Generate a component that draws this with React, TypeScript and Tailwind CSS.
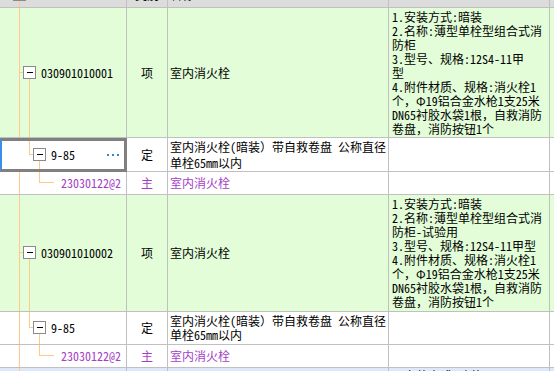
import type { ReactNode } from 'react';

const FONT = "font-['Noto_Sans_Mono_CJK_SC','Noto_Sans_CJK_SC',sans-serif]";
const COLS = 'grid grid-cols-[127px_41px_221px_161px_1fr]';
const CELL = 'border-r border-b border-[#c0c0c0] overflow-hidden';
const GREEN = 'bg-[#e2fdd8]';
const ORANGE = '#ffc98a';
const PURPLE = 'text-[#a53ec6]';

const SPEC1 = [
  '1.安装方式:暗装',
  '2.名称:薄型单栓型组合式消',
  '防柜',
  '3.型号、规格:12S4-11甲',
  '型',
  '4.附件材质、规格:消火栓1',
  '个，Φ19铝合金水枪1支25米',
  'DN65衬胶水袋1根，自救消防',
  '卷盘，消防按钮1个',
];

const SPEC2 = [
  '1.安装方式:暗装',
  '2.名称:薄型单栓型组合式消',
  '防柜-试验用',
  '3.型号、规格:12S4-11甲型',
  '4.附件材质、规格:消火栓1',
  '个，Φ19铝合金水枪1支25米',
  'DN65衬胶水袋1根，自救消防',
  '卷盘，消防按钮1个',
];

const QUOTA = ['室内消火栓(暗装）带自救卷盘 公称直径', '单栓65mm以内'];

// tree expand box, 13x13 with a minus sign
function Box({ x, y }: { x: number; y: number }) {
  return (
    <g>
      <rect x={x + 0.5} y={y + 0.5} width={12} height={12} fill="#fff" stroke="#8a8a8a" />
      <rect x={x + 4} y={y + 6} width={6} height={1} fill="#000" />
    </g>
  );
}

type TreeProps = {
  h: number;
  level: 1 | 2 | 3;
  down?: boolean;
  selected?: boolean;
  dots?: boolean;
  children: ReactNode;
};

function TreeCell({ h, level, down = false, selected = false, dots = false, children }: TreeProps) {
  const mid = Math.floor((h - 1) / 2);
  const pad = level === 1 ? 'pl-[41px]' : level === 2 ? 'pl-[51px]' : 'pl-[61px]';
  const childX = level === 1 ? 29 : 39;
  return (
    <div
      className={`relative flex items-center border-r border-b ${pad} ${
        selected ? 'border-[#808080] bg-white' : 'border-[#c0c0c0]'
      }`}
    >
      <svg className="absolute left-0 top-0" width={126} height={h}>
        {!selected && <rect x={19} y={0} width={1} height={h} fill={ORANGE} />}
        {level === 1 && <rect x={19} y={mid} width={4} height={1} fill={ORANGE} />}
        {level === 2 && (
          <>
            <rect x={29} y={0} width={1} height={mid} fill={ORANGE} />
            <rect x={29} y={mid} width={4} height={1} fill={ORANGE} />
          </>
        )}
        {level === 3 && (
          <>
            <rect x={39} y={0} width={1} height={mid} fill={ORANGE} />
            <rect x={39} y={mid} width={15} height={1} fill={ORANGE} />
          </>
        )}
        {level === 1 && <Box x={23} y={mid - 6} />}
        {level === 2 && <Box x={33} y={mid - 6} />}
        {down && <rect x={childX} y={mid + 7} width={1} height={h - mid - 7} fill={ORANGE} />}
      </svg>
      <span className={`relative whitespace-nowrap ${level === 3 ? PURPLE : ''}`}>{children}</span>
      {dots && (
        <span className="relative ml-auto mr-[7px] flex gap-[3px]">
          <span className="h-[2px] w-[2px] bg-[#3a86cc]" />
          <span className="h-[2px] w-[2px] bg-[#3a86cc]" />
          <span className="h-[2px] w-[2px] bg-[#3a86cc]" />
        </span>
      )}
      {selected && (
        <div className="absolute inset-0 border-2 border-t-[3px] border-[#808080] border-l-[#3b8ee8]" />
      )}
    </div>
  );
}

function Kind({ purple = false, children }: { purple?: boolean; children: ReactNode }) {
  return <div className={`${CELL} flex items-center justify-center ${purple ? PURPLE : ''}`}>{children}</div>;
}

function Name({ lines, purple = false, lead = 'leading-[14px]' }: { lines: string[]; purple?: boolean; lead?: string }) {
  return (
    <div className={`${CELL} flex flex-col justify-center pl-[2px] ${lead} ${purple ? PURPLE : ''}`}>
      {lines.map((l) => (
        <div key={l} className="whitespace-nowrap">
          {l}
        </div>
      ))}
    </div>
  );
}

function Spec({ lines = [] }: { lines?: string[] }) {
  return (
    <div className={`${CELL} flex flex-col justify-center pl-[3px]`}>
      {lines.map((l) => (
        <div key={l} className="whitespace-nowrap">
          {l}
        </div>
      ))}
    </div>
  );
}

export default function App() {
  return (
    <div className={`h-[371px] w-[554px] overflow-hidden bg-white text-[12px] leading-[14px] text-black ${FONT}`}>
      {/* header, scrolled mostly out of view */}
      <div className={`${COLS} h-[8px] bg-[#dcdcdc]`}>
        <div className={`${CELL} relative`}>
          <svg className="absolute left-0 top-0" width={126} height={7}>
            <rect x={13} y={0} width={13} height={1} fill="#8a8a8a" />
            <rect x={19} y={1} width={1} height={6} fill={ORANGE} />
          </svg>
        </div>
        <div className={`${CELL} text-center`}>
          <div className="mt-[-12px]">类别</div>
        </div>
        <div className={`${CELL} pl-[2px]`}>
          <div className="mt-[-12px]">名称</div>
        </div>
        <div className={CELL} />
        <div className="border-b border-[#c0c0c0]" />
      </div>

      <div className={`${COLS} h-[130px] ${GREEN}`}>
        <TreeCell h={129} level={1} down>
          030901010001
        </TreeCell>
        <Kind>项</Kind>
        <Name lines={['室内消火栓']} />
        <Spec lines={SPEC1} />
        <div className="border-b border-[#c0c0c0]" />
      </div>

      <div className={`${COLS} h-[34px] bg-white`}>
        <TreeCell h={33} level={2} down selected dots>
          9-85
        </TreeCell>
        <Kind>定</Kind>
        <Name lines={QUOTA} lead="leading-[16px]" />
        <Spec />
        <div className="border-b border-[#c0c0c0]" />
      </div>

      <div className={`${COLS} h-[23px] bg-white`}>
        <TreeCell h={22} level={3}>
          23030122@2
        </TreeCell>
        <Kind purple>主</Kind>
        <Name lines={['室内消火栓']} purple />
        <Spec />
        <div className="border-b border-[#c0c0c0]" />
      </div>

      <div className={`${COLS} h-[117px] ${GREEN}`}>
        <TreeCell h={116} level={1} down>
          030901010002
        </TreeCell>
        <Kind>项</Kind>
        <Name lines={['室内消火栓']} />
        <Spec lines={SPEC2} />
        <div className="border-b border-[#c0c0c0]" />
      </div>

      <div className={`${COLS} h-[33px] bg-white`}>
        <TreeCell h={32} level={2} down>
          9-85
        </TreeCell>
        <Kind>定</Kind>
        <Name lines={QUOTA} />
        <Spec />
        <div className="border-b border-[#c0c0c0]" />
      </div>

      <div className={`${COLS} h-[23px] bg-white`}>
        <TreeCell h={22} level={3}>
          23030122@2
        </TreeCell>
        <Kind purple>主</Kind>
        <Name lines={['室内消火栓']} purple />
        <Spec />
        <div className="border-b border-[#c0c0c0]" />
      </div>

      {/* next group, only its top edge is in view */}
      <div className={`${COLS} h-[20px] bg-[#dde8fa]`}>
        <div className="relative border-r border-[#c0c0c0]">
          <svg className="absolute left-0 top-0" width={126} height={20}>
            <rect x={19} y={0} width={1} height={20} fill={ORANGE} />
          </svg>
        </div>
        <div className="border-r border-[#c0c0c0]" />
        <div className="border-r border-[#c0c0c0]" />
        <div className="border-r border-[#c0c0c0] pl-[3px] pt-[1px]">
          <div className="whitespace-nowrap">1.安装方式:暗装</div>
        </div>
        <div />
      </div>
    </div>
  );
}
